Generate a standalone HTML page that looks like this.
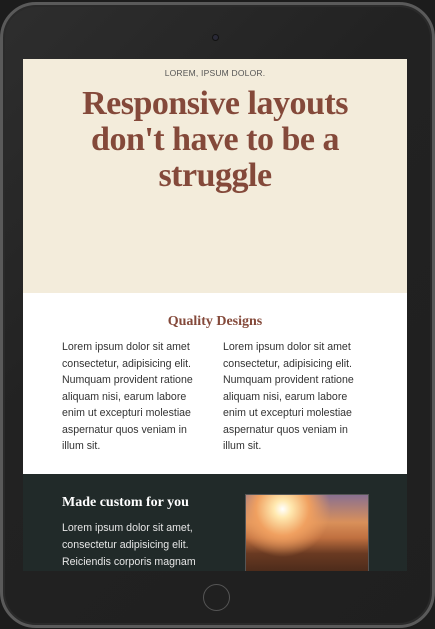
<!DOCTYPE html>
<html><head><style>
*{margin:0;padding:0;box-sizing:border-box}
body{width:435px;height:629px;background:#1c1c1c;position:relative;overflow:hidden;font-family:"Liberation Sans",sans-serif}
.tab{position:absolute;left:0;top:2px;width:435px;height:626px;border-radius:36px;background:linear-gradient(135deg,#2e2e2e,#222 40%,#1f1f1f);border:3px solid #5a5a5a;box-shadow:inset 0 0 0 2px #2a2a2a}
.cam{position:absolute;left:212px;top:34px;width:7px;height:7px;border-radius:50%;background:#2a2a38;border:1px solid #111}
.home{position:absolute;left:203px;top:584px;width:27px;height:27px;border-radius:50%;border:1px solid #555}
.screen{position:absolute;left:23px;top:59px;width:384px;height:512px;overflow:hidden;background:#fff}
.hero{height:234px;background:#f3ecdb;text-align:center}
.kick{padding-top:9px;font-size:8.5px;color:#555;letter-spacing:.2px}
h1{font-family:"Liberation Serif",serif;font-weight:900;color:#84493a;font-size:34px;line-height:36px;margin-top:8px;padding:0 50px;letter-spacing:-.5px}
.q{height:181px;background:#fff}
h2{font-family:"Liberation Serif",serif;font-weight:bold;color:#84493a;font-size:14px;text-align:center;padding-top:21px}
.cols{display:flex;padding-left:39px;margin-top:9px}
.cols p{width:145px;margin-right:16px;font-size:10.6px;line-height:16.5px;color:#333}
.dark{height:97px;background:#212a29;position:relative}
h3{position:absolute;left:39px;top:21px;font-family:"Liberation Serif",serif;font-weight:bold;color:#fff;font-size:14px}
.dp{position:absolute;left:39px;top:46px;width:170px;font-size:10.6px;line-height:17px;color:#e6e6e6}
.img{position:absolute;left:222px;top:20px;width:124px;height:80px;background:radial-gradient(circle at 30% 18%,#fff 0,#ffe9b0 8%,#f0a060 25%,transparent 45%),linear-gradient(180deg,#8a7090 0,#d9905a 35%,#c07040 55%,#6a3a22 75%,#4a2a1a 100%);border:1px solid #555}
</style></head><body>
<div class="tab"></div>
<div class="cam"></div>
<div class="home"></div>
<div class="screen">
<div class="hero"><div class="kick">LOREM, IPSUM DOLOR.</div><h1>Responsive layouts don't have to be a struggle</h1></div>
<div class="q"><h2>Quality Designs</h2>
<div class="cols"><p>Lorem ipsum dolor sit amet consectetur, adipisicing elit. Numquam provident ratione aliquam nisi, earum labore enim ut excepturi molestiae aspernatur quos veniam in illum sit.</p><p>Lorem ipsum dolor sit amet consectetur, adipisicing elit. Numquam provident ratione aliquam nisi, earum labore enim ut excepturi molestiae aspernatur quos veniam in illum sit.</p></div></div>
<div class="dark"><h3>Made custom for you</h3><p class="dp">Lorem ipsum dolor sit amet, consectetur adipisicing elit. Reiciendis corporis magnam</p><div class="img"></div></div>
</div>
</body></html>
